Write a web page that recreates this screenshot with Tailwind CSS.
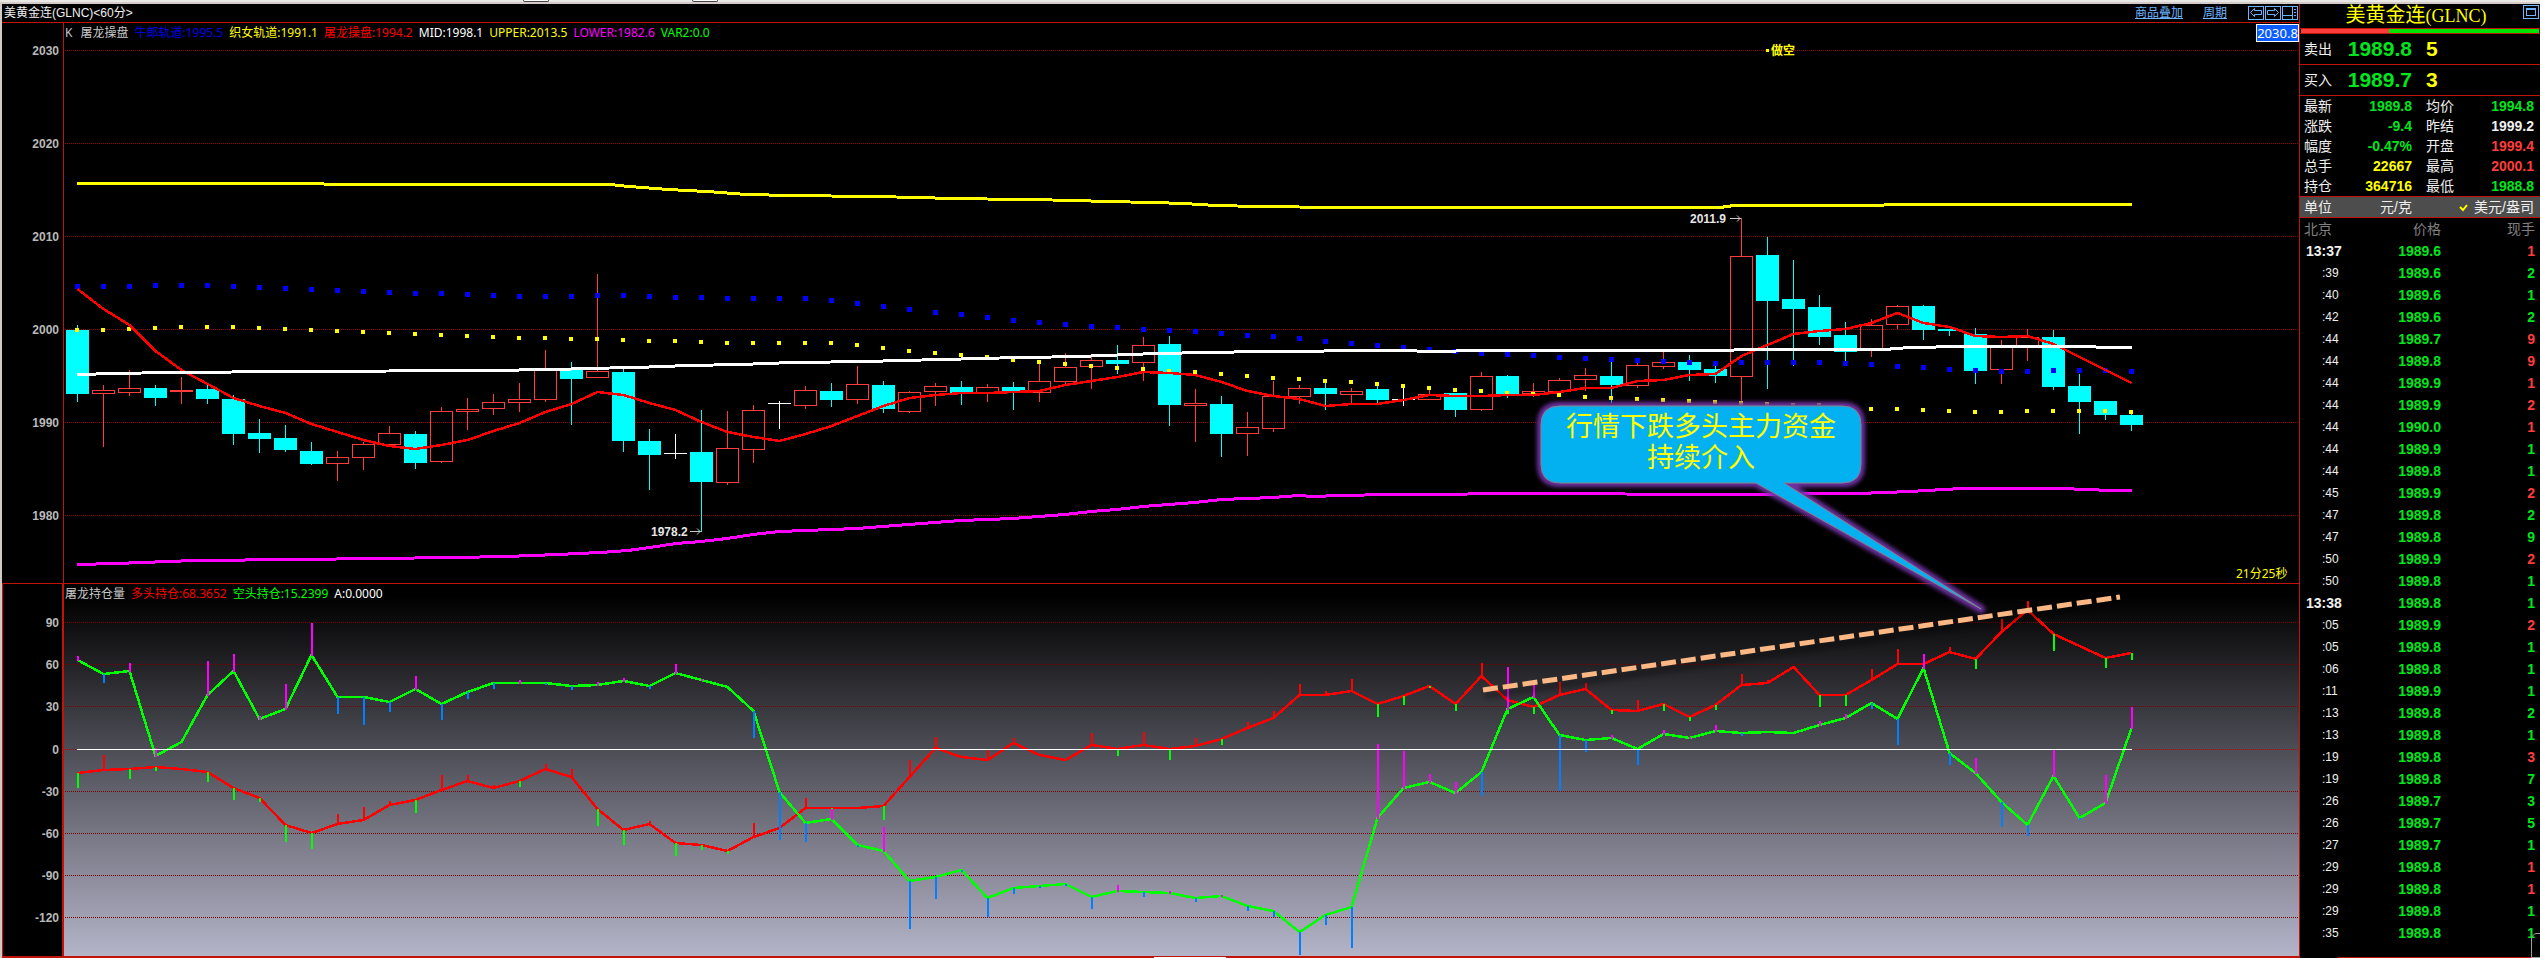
<!DOCTYPE html>
<html lang="zh-CN">
<head>
    <meta charset="UTF-8">
    <meta name="viewport" content="width=device-width, initial-scale=1.0">
    <title>美黄金连(GLNC)</title>
    <script src="https://cdn.jsdelivr.net/npm/@tailwindcss/browser@4"></script>
</head>
<body class="bg-black text-[#f0f0f0] font-['Liberation_Sans','Noto_Sans_CJK_SC',sans-serif] text-xs overflow-hidden">
<div class="relative h-1 bg-[#e9e8e5] border-b-2 border-[#d2cac6]">
    <div class="absolute left-[523px] top-0 w-[26px] h-[2px] rounded-b bg-white border-b border-x border-[#444]"></div>
    <div class="absolute left-[692px] top-0 w-[26px] h-[2px] rounded-b bg-white border-b border-x border-[#444]"></div>
</div>
<div class="flex border-l-2 border-[#d2cac6]">
    <!-- charts -->
    <main class="flex-1 min-w-0 font-['Noto_Sans','Noto_Sans_CJK_SC',sans-serif]">
        <header class="h-[19px] flex items-center justify-between border-b border-[#c0140a] pl-[2px]">
            <h1 class="font-['Liberation_Sans','Noto_Sans_CJK_SC',sans-serif] leading-[18px]">美黄金连(GLNC)&lt;60分&gt;</h1>
            <nav class="flex items-center leading-[18px] text-[#6cb6ff]">
                <a href="#" class="underline mr-5">商品叠加</a>
                <a href="#" class="underline mr-[21px]">周期</a>
                <button aria-label="后退" class="mr-px"><svg class="block" width="16" height="14" fill="none" stroke="currentColor" shape-rendering="crispEdges"><path d="M.5 .5h15v13H.5z"/><path shape-rendering="auto" d="M2.5 6.5l4-4v2h7v4h-7v2z"/></svg></button>
                <button aria-label="前进" class="mr-px"><svg class="block" width="16" height="14" fill="none" stroke="currentColor" shape-rendering="crispEdges"><path d="M.5 .5h15v13H.5z"/><path shape-rendering="auto" d="M13.5 6.5l-4-4v2h-7v4h7v2z"/></svg></button>
                <button aria-label="布局" class="mr-px"><svg class="block" width="16" height="14" fill="none" stroke="currentColor" shape-rendering="crispEdges"><path d="M.5 .5h15v13H.5zM10.5 1v12M0 9.5h10M12 3.5h2M12 6.5h2M12 9.5h2"/></svg></button>
            </nav>
        </header>
        <div class="relative">
            <svg id="chart" class="block w-full h-[935px]" viewBox="2 23 2297 935" preserveAspectRatio="none"></svg>
            <div class="absolute left-[63px] top-[1px] flex gap-[6px] leading-[18px]">
                <span class="text-[#c8c8c8] mr-[2px]">K</span>
                <span class="text-[#c8c8c8]">屠龙操盘</span>
                <span class="text-[#0000f0]">牛郎轨道:1995.5</span>
                <span class="text-[#ffff00]">织女轨道:1991.1</span>
                <span class="text-[#ff0000]">屠龙操盘:1994.2</span>
                <span class="text-white">MID:1998.1</span>
                <span class="text-[#ffff00]">UPPER:2013.5</span>
                <span class="text-[#ff00ff]">LOWER:1982.6</span>
                <span class="text-[#00ff00]">VAR2:0.0</span>
            </div>
            <div class="absolute left-[63px] top-[562px] flex gap-[6px] leading-[18px]">
                <span class="text-[#c8c8c8]">屠龙持仓量</span>
                <span class="text-[#ff0000]">多头持仓:68.3652</span>
                <span class="text-[#00ff00]">空头持仓:15.2399</span>
                <span class="text-white">A:0.0000</span>
            </div>
            <div class="absolute right-0 top-[1px] w-[43px] h-[18px] border border-white bg-[#0a5cff] text-white text-[13px] leading-4 text-center">2030.8</div>
        </div>
    </main>

    <!-- quote panel -->
    <aside class="w-[241px] shrink-0 border-l border-[#c0140a] relative">
        <div class="h-6 flex items-center justify-center text-[#ffff00] text-xl leading-6 pr-2">
            <h2>美黄金连<span class="font-['Liberation_Serif',serif] text-lg">(GLNC)</span></h2>
            <button aria-label="还原" class="absolute right-px top-[1px] text-[#6cb6ff]"><svg class="block" width="16" height="14" fill="none" stroke="currentColor" shape-rendering="crispEdges"><path d="M.5 .5h15v13H.5zM3.5 3.5h9v7h-9zM3 4.5h10"/></svg></button>
        </div>
        <div class="flex h-[6px] border-y border-[#c0140a] px-px">
            <div class="w-[37%] bg-[#ff3c3c]"></div>
            <div class="flex-1 bg-[#00e600]"></div>
        </div>
        <div class="h-[31px] flex items-center border-b border-[#c0140a] pl-1">
            <span class="w-7 text-sm">卖出</span>
            <b class="w-20 text-right text-[21px] text-[#00e61e]">1989.8</b>
            <b class="ml-[14px] text-[21px] text-[#ffff00]">5</b>
        </div>
        <div class="h-[31px] flex items-center border-b border-[#c0140a] pl-1">
            <span class="w-7 text-sm">买入</span>
            <b class="w-20 text-right text-[21px] text-[#00e61e]">1989.7</b>
            <b class="ml-[14px] text-[21px] text-[#ffff00]">3</b>
        </div>
        <dl class="grid grid-cols-[28px_80px_14px_28px_80px] auto-rows-[20px] items-center pl-1 text-sm leading-5 [&>dd]:font-bold [&>dd]:text-right">
            <dt>最新</dt><dd class="text-[#00e61e]">1989.8</dd><dt class="col-start-4">均价</dt><dd class="text-[#00e61e]">1994.8</dd>
            <dt>涨跌</dt><dd class="text-[#00e61e]">-9.4</dd><dt class="col-start-4">昨结</dt><dd>1999.2</dd>
            <dt>幅度</dt><dd class="text-[#00e61e]">-0.47%</dd><dt class="col-start-4">开盘</dt><dd class="text-[#ff3c3c]">1999.4</dd>
            <dt>总手</dt><dd class="text-[#ffff00]">22667</dd><dt class="col-start-4">最高</dt><dd class="text-[#ff3c3c]">2000.1</dd>
            <dt>持仓</dt><dd class="text-[#ffff00]">364716</dd><dt class="col-start-4">最低</dt><dd class="text-[#00e61e]">1988.8</dd>
        </dl>
        <div class="h-[22px] flex items-center border-y border-[#c0140a] bg-[#4d4d4d] pl-1 pr-[6px] text-sm">
            <span class="w-7">单位</span>
            <span class="w-20 text-right">元/克</span>
            <svg class="ml-auto mr-[6px]" width="9" height="9" fill="none" stroke="#ffff00" stroke-width="2"><path d="M1 4l3 3 4-5"/></svg>
            <span>美元/盎司</span>
        </div>
        <table class="w-full table-fixed text-sm font-bold">
            <thead class="text-[#808080]">
            <tr class="h-[22px] leading-[22px]">
                <th class="w-[70px] pl-1 text-left font-normal">北京</th>
                <th class="w-[71px] text-right font-normal">价格</th>
                <th class="pr-[5px] text-right font-normal">现手</th>
            </tr>
            </thead>
            <tbody id="ticks"></tbody>
        </table>
        <div class="absolute bottom-0 left-[38px] right-0 h-px bg-[#c0140a]"></div>
        <div class="absolute bottom-0 right-[-7px] w-4 h-[25px] rounded-t-md border border-[#a0a0a0]"></div>
    </aside>
</div>
<script>
    // time, price, volume, r = buy / g = sell
    const ticks = [
        ['13:37', '1989.6', 1, 'r'], [':39', '1989.6', 2, 'g'], [':40', '1989.6', 1, 'g'], [':42', '1989.6', 2, 'g'],
        [':44', '1989.7', 9, 'r'], [':44', '1989.8', 9, 'r'], [':44', '1989.9', 1, 'r'], [':44', '1989.9', 2, 'r'],
        [':44', '1990.0', 1, 'r'], [':44', '1989.9', 1, 'g'], [':44', '1989.8', 1, 'g'], [':45', '1989.9', 2, 'r'],
        [':47', '1989.8', 2, 'g'], [':47', '1989.8', 9, 'g'], [':50', '1989.9', 2, 'r'], [':50', '1989.8', 1, 'g'],
        ['13:38', '1989.8', 1, 'g'], [':05', '1989.9', 2, 'r'], [':05', '1989.8', 1, 'g'], [':06', '1989.8', 1, 'g'],
        [':11', '1989.9', 1, 'g'], [':13', '1989.8', 2, 'g'], [':13', '1989.8', 1, 'g'], [':19', '1989.8', 3, 'r'],
        [':19', '1989.8', 7, 'g'], [':26', '1989.7', 3, 'g'], [':26', '1989.7', 5, 'g'], [':27', '1989.7', 1, 'g'],
        [':29', '1989.8', 1, 'r'], [':29', '1989.8', 1, 'r'], [':29', '1989.8', 1, 'g'], [':35', '1989.8', 1, 'g'],
    ]
    document.getElementById('ticks').innerHTML = ticks.map(([time, price, vol, side]) => `
        <tr class="h-[22px] leading-[22px]">
            <td class="${time[0] === ':' ? 'pl-[22px] text-xs leading-[22px] font-normal' : 'pl-[6px]'}">${time}</td>
            <td class="text-right text-[#00e61e]">${price}</td>
            <td class="pr-[5px] text-right ${side === 'r' ? 'text-[#ff3c3c]' : 'text-[#00e61e]'}">${vol}</td>
        </tr>`).join('')

    // candles: kind (d down, u up, w flat), high, body top, body bottom, low
    const candles = `d 325 330 394 402|u 385 390 394 447|u 370 388 393 396|d 385 388 398 406|u 377 390 392 404
|d 385 389 399 404|d 395 399 434 445|d 419 433 439 453|d 425 438 450 452|d 442 451 464 465
|u 451 457 464 481|u 442 444 458 470|u 426 433 445 445|d 431 434 463 469|u 407 411 462 463
|u 398 409 412 430|u 394 402 409 415|u 383 399 403 412|u 350 370 400 402|d 362 370 379 425
|u 274 371 378 378|d 366 372 441 452|d 429 441 455 490|w 434 453 454 459|d 410 452 482 532
|u 411 448 483 485|u 405 410 450 463|w 401 403 404 429|u 386 390 406 409|d 383 391 400 407
|u 366 384 400 404|d 381 385 409 413|u 391 392 412 413|u 383 386 392 406|d 381 387 393 405
|u 384 387 393 402|d 382 387 392 410|u 363 381 393 402|u 353 367 382 384|u 354 360 367 389
|d 345 360 364 374|u 337 345 363 381|d 336 344 405 426|u 389 403 406 442|d 396 404 434 457
|u 412 427 434 456|u 381 396 429 432|u 385 388 397 404|d 383 388 394 410|u 388 391 395 403
|d 385 389 400 403|w 387 399 400 406|u 390 394 400 400|d 393 393 410 417|u 372 376 410 411
|d 375 376 395 398|u 383 391 394 397|u 378 380 392 392|u 368 375 380 391|d 360 376 385 403
|u 362 365 386 388|u 352 362 367 369|d 355 362 370 381|d 365 369 376 383|u 218 256 377 406
|d 237 255 301 389|d 260 299 309 366|d 295 307 337 345|d 322 335 352 362|u 319 325 350 357
|u 305 306 325 329|d 305 306 330 340|d 329 329 331 336|d 328 334 371 384|u 340 346 370 384
|u 329 337 347 361|d 330 337 387 390|d 374 386 402 434|d 401 401 415 420|d 414 415 425 431`
        .split('|').map(s => s.trim().split(' '))

    const ma = [289,309,325,351,370,384,398,406,413,424,432,440,446,449,445,440,431,423,412,404,392,395,403,410,422,432,437,441,434,426,416,406,398,395,393,393,392,391,385,381,377,372,373,375,382,391,396,399,406,404,404,400,395,396,396,395,395,392,388,388,381,380,375,374,356,345,334,331,329,323,313,323,327,336,337,336,344,357,370,383]
    const blueDots = [286,286,286,285,285,285,286,287,288,289,290,291,292,293,293,294,295,296,296,296,295,295,296,297,297,298,298,298,298,300,303,306,309,312,314,317,320,322,324,326,327,329,330,331,333,335,336,338,341,343,345,347,349,351,353,354,355,357,358,359,360,361,362,363,362,362,362,362,363,364,366,367,369,370,371,371,370,370,370,371]
    const yellowDots = [330,330,329,328,327,327,327,328,329,330,331,332,333,334,335,336,337,338,338,339,339,340,341,341,342,343,343,343,343,343,345,348,351,353,355,357,360,362,364,366,368,369,371,372,374,376,378,379,381,382,384,386,388,390,391,393,394,395,397,398,399,400,401,402,403,404,405,405,408,409,409,410,411,412,412,411,411,411,411,412]

    // slow bands as x,y points
    const mid = '77,374 116,373 168,372 298,371 480,370 559,369 584,368 636,367 662,366 688,365 740,364 766,363 792,362 870,361 896,360 948,359 974,358 1026,357 1078,356 1105,355 1130,354 1157,353 1208,352 1261,351 1391,350 1443,351 1469,350 1728,350 1740,349 1884,349 1910,347 1963,346 2092,346 2100,347 2132,347'
    const upper = '77,183 320,183 328,184 610,184 629,186 655,188 668,189 707,191 733,193 746,194 792,195 870,196 922,197 948,198 1026,199 1078,200 1104,201 1156,202 1182,203 1201,204 1214,205 1260,206 1338,207 1720,207 1734,205 1880,205 1888,204 2132,204'
    const lower = '77,564 116,563 142,562 168,561 194,560 298,559 377,558 454,557 506,556 532,555 558,554 600,552 628,550 650,547 676,543 701,541 727,538 753,534 779,531 831,529 857,528 883,526 935,522 961,520 1013,518 1039,516 1065,514 1091,511 1117,509 1143,506 1169,504 1195,502 1221,499 1247,498 1273,497 1299,495 1313,496 1339,495 1391,494 1547,493 1703,494 1858,493 1884,492 1910,491 1943,489 1963,488 2067,488 2080,489 2118,490 2132,490'

    // open interest: line y, tip of the bar at that point
    const shorts = [[660,656],[674,682],[671,663],[756,748],[742],[695,661],[671,654],[719,716],[709,684],[655,623],[697,713],[697,724],[702,711],[689,676],[704,719],[692,698],[683,688],[683,680],[683,684],[686,689],[685,682],[681,678],[686,688],[673,664],[680,679],[687],[711,737],[792,839],[823,841],[819,809],[845,846],[851,827],[881,928],[877,898],[870,871],[898,916],[888,893],[886,887],[884,885],[897,908],[891,885],[892,896],[893,891],[898,901],[896,895],[906,910],[911,916],[932,954],[915,924],[907,947],[818,744],[788,751],[782,774],[793,782],[772,795],[709,667],[697,685],[735,790],[740,751],[738,735],[749,764],[734,730],[738,737],[731,725],[733,735],[732],[733],[725,721],[718,714],[703,708],[719,744],[668,654],[753,764],[773,758],[802,826],[825,835],[776,750],[818,819],[803,775],[728,707]]
    const longs = [[773,787],[770,755],[769,778],[767,770],[769],[772,781],[788,799],[798,801],[825,841],[833,848],[824,814],[820,807],[805,801],[800,812],[790,775],[781,775],[788,785],[781,786],[769,764],[777,769],[809,825],[830,844],[824,821],[843,855],[845,849],[851,853],[837,823],[828],[808,798],[808,810],[808],[806,819],[777,760],[748,737],[757],[760,750],[743,738],[755],[760],[745,733],[749,755],[745,732],[749,759],[746,738],[739,744],[728,722],[718,711],[695,684],[695,691],[691,679],[704,716],[696,704],[686,687],[704,710],[676,663],[700,713],[707,713],[695,682],[689,683],[710,713],[711,700],[704,710],[717,720],[705,709],[685,674],[683,680],[667],[695,706],[695,705],[680,669],[664,649],[664],[652,647],[659,668],[632,619],[610,601],[634,650],[646],[658,667],[653,659]]

    const X = i => 77 + 26 * i
    const rect = (x, y, w, h, fill) => `<rect x="${x}" y="${y}" width="${w}" height="${h}" fill="${fill}"/>`
    const line = (pts, color, w) => `<polyline points="${pts}" fill="none" stroke="${color}" stroke-width="${w}"/>`
    const series = ys => ys.map((y, i) => `${X(i) + 0.5},${y}`).join(' ')
    const thick = pts => pts.split(' ').map(p => p + '.5').join(' ')
    const grid = (y, color) => `<path d="M65 ${y}.5H2299" stroke="${color}" stroke-dasharray="1 1"/>`
    const label = (y, t) => `<text x="59" y="${y + 5}" text-anchor="end" font-size="12" font-weight="bold" fill="#b9b9b9">${t}</text>`
    const bars = (arr, up, down) => arr.map(([y, tip], i) => tip === undefined ? '' :
        rect(X(i), Math.min(y, tip), 2, Math.abs(tip - y) + 1, tip < y ? up : down)).join('')

    let s = `<defs>
        <linearGradient id="bg" x1="0" y1="0" x2="0" y2="1"><stop offset="0.03" stop-color="#000"/><stop offset="1" stop-color="#b4b4c9"/></linearGradient>
        <filter id="glow" x="-10%" y="-20%" width="120%" height="140%"><feGaussianBlur stdDeviation="2"/></filter>
        <filter id="shade" x="-5%" y="-20%" width="110%" height="150%"><feGaussianBlur stdDeviation="3"/></filter>
    </defs><g shape-rendering="crispEdges" font-family="Liberation Sans, Noto Sans CJK SC, sans-serif">`
    s += rect(64, 584, 2235, 372, 'url(#bg)')
    for (let i = 0; i < 6; i++) s += grid(50 + 93 * i, '#960000') + label(50 + 93 * i, 2030 - 10 * i)
    ;[622, 664, 706, 749, 791, 833, 875, 917].forEach((y, i) => {
        s += grid(y, i === 3 ? '#c00000' : '#7c0000') + label(y, 90 - 30 * i)
    })

    // frame
    s += rect(63, 23, 1, 561, '#c0140a') + rect(2, 583, 2297, 1, '#c0140a') + rect(2, 584, 1, 372, '#c0140a')
        + rect(62, 584, 2, 372, '#c0140a') + rect(2, 956, 2297, 2, '#c0140a') + rect(1154, 957, 72, 1, '#fff')

    candles.forEach(([k, hi, top, bot, lo], i) => {
        const x = X(i), h = bot - top
        if (k === 'd') s += rect(x, hi, 1, lo - hi, '#00ffff') + rect(x - 11, top, 23, h, '#00ffff')
        if (k === 'w') s += rect(x, hi, 1, lo - hi, '#fff') + rect(x - 11, top, 23, 1, '#fff')
        if (k === 'u') s += rect(x, hi, 1, top - hi, '#ff3c3c') + rect(x, bot, 1, lo - bot, '#ff3c3c')
            + `<rect x="${x - 10.5}" y="${+top + 0.5}" width="22" height="${h - 1}" fill="none" stroke="#ff3c3c"/>`
    })
    blueDots.forEach((y, i) => s += rect(X(i) - 2, y - 2, 5, 5, '#0000ff'))
    yellowDots.forEach((y, i) => s += rect(X(i) - 2, y - 2, 4, 4, '#ffff00'))
    s += line(series(ma), '#ff0000', 2.5)
    s += line(thick(mid), '#ffffff', 3) + line(thick(upper), '#ffff00', 3) + line(thick(lower), '#ff00ff', 3)

    s += line(series(longs.map(p => p[0])), '#ff0000', 2.5) + line(series(shorts.map(p => p[0])), '#00ff00', 2.5)
    s += bars(longs, '#ff0000', '#00ff00') + bars(shorts, '#ff00ff', '#0080ff')
    s += rect(77, 749, 2055, 1, '#fff')
    s += '</g>'

    // high and low marks, signal, countdown
    s += `<g font-family="Liberation Sans, sans-serif" font-size="12" font-weight="bold" fill="#e6e6e6">
        <text x="1690" y="223">2011.9</text><text x="651" y="536">1978.2</text></g>
        <path d="M1730 218.5h11m-4-3l3 3-3 3M690 531.5h11m-4-3l3 3-3 3" fill="none" stroke="#c8c8c8"/>
        <g font-family="Noto Sans, Noto Sans CJK SC, sans-serif" font-size="12" fill="#ffff00">
        <text x="1771" y="55" font-weight="bold">做空</text>${rect(1766, 49, 3, 3, '#ffff00')}
        <text x="2236" y="578">21分25秒</text></g>`

    // trend line
    s += `<path d="M1484 696L2120 603" stroke="#000" stroke-opacity="0.4" stroke-width="5" filter="url(#shade)"/>
        <path d="M1483 690L2120 597" stroke="#fbb884" stroke-width="5" stroke-dasharray="15 5"/>`

    // callout
    const bubble = 'M1560 406H1842Q1861 406 1861 425V464Q1861 483 1842 483H1784L1981 609L1756 483H1560Q1541 483 1541 464V425Q1541 406 1560 406Z'
    s += `<path d="${bubble}" fill="#7030a0" stroke="#7030a0" stroke-width="8" stroke-linejoin="round" filter="url(#glow)"/>
        <path d="${bubble}" fill="#04b1f0" stroke="#7f8790"/>
        <text font-family="Noto Sans CJK SC, sans-serif" font-size="27" fill="#ffff00" text-anchor="middle">
        <tspan x="1701" y="436">行情下跌多头主力资金</tspan><tspan x="1701" y="467">持续介入</tspan></text>`
    document.getElementById('chart').innerHTML = s
</script>
</body>
</html>
